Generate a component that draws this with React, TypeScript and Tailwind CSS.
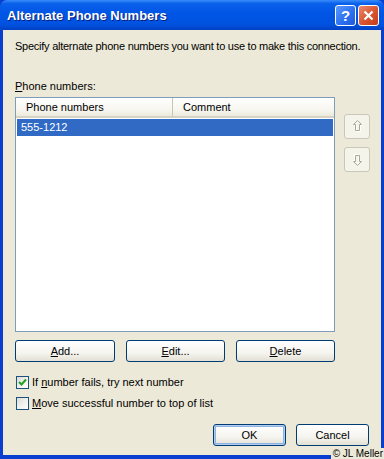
import type { ReactNode } from "react";

const FONT = "font-['Tahoma','Liberation_Sans',Arial,sans-serif] text-[11px] leading-[13px]";

function U({ children }: { children: ReactNode }) {
  return <span className="underline underline-offset-[1px]">{children}</span>;
}

function XpButton({
  children,
  className = "",
  isDefault = false,
}: {
  children: ReactNode;
  className?: string;
  isDefault?: boolean;
}) {
  return (
    <button
      className={`h-[22px] rounded-[3px] border border-[#003c74] bg-[linear-gradient(to_bottom,#ffffff_0%,#f5f4ef_60%,#e3e0d4_100%)] text-black ${
        isDefault ? "shadow-[inset_0_0_0_1px_#b3cdf1,inset_0_0_0_2px_#8db2e3]" : ""
      } ${className}`}
    >
      {children}
    </button>
  );
}

function ArrowButton({ down = false }: { down?: boolean }) {
  return (
    <div className="flex h-[25px] w-[26px] items-center justify-center rounded-[3px] border border-[#c9c7ba] bg-[#f5f4ea]">
      <svg width="11" height="13" viewBox="0 0 11 13" className={down ? "rotate-180" : ""}>
        <path d="M6.5 1.5 L10.5 5.5 L8.5 5.5 L8.5 11.5 L4.5 11.5 L4.5 5.5 L2.5 5.5 Z" fill="none" stroke="#ffffff" />
        <path d="M5.5 0.5 L9.5 4.5 L7.5 4.5 L7.5 10.5 L3.5 10.5 L3.5 4.5 L1.5 4.5 Z" fill="none" stroke="#aca899" />
      </svg>
    </div>
  );
}

function Checkbox({ checked }: { checked?: boolean }) {
  return (
    <div className="flex h-[13px] w-[13px] items-center justify-center border border-[#1c5180] bg-[linear-gradient(135deg,#dcdbd5_0%,#f4f4f0_60%,#ffffff_100%)]">
      {checked && (
        <svg width="9" height="9" viewBox="0 0 9 9">
          <path d="M1 4 L3.5 6.5 L8 1.5" fill="none" stroke="#21a121" strokeWidth="2" />
        </svg>
      )}
    </div>
  );
}

export default function App() {
  return (
    <div className={`relative flex h-[459px] w-[384px] flex-col overflow-hidden bg-[#0a3ed0] ${FONT}`}>
      {/* Title bar */}
      <div className="flex h-[30px] shrink-0 items-center rounded-t-[7px] bg-[linear-gradient(to_bottom,#3a8cfb_0%,#0a61ea_12%,#0055e5_45%,#0053e0_80%,#0041c4_100%)] pl-[7px] pr-[5px]">
        <span className="flex-1 font-['Trebuchet_MS','Liberation_Sans',Arial,sans-serif] text-[13px] font-bold text-white [text-shadow:1px_1px_0_#0a1e79]">
          Alternate Phone Numbers
        </span>
        <div className="flex gap-[2px]">
          <div className="flex h-[21px] w-[21px] items-center justify-center rounded-[3px] border border-white bg-[linear-gradient(135deg,#5b97fb_0%,#2a6ff1_60%,#1f5bd6_100%)] text-[15px] font-bold leading-none text-white">
            ?
          </div>
          <div className="flex h-[21px] w-[21px] items-center justify-center rounded-[3px] border border-white bg-[linear-gradient(135deg,#e88a6c_0%,#d9532f_55%,#c33e1a_100%)]">
            <svg width="11" height="11" viewBox="0 0 11 11">
              <path d="M1.5 1.5 L9.5 9.5 M9.5 1.5 L1.5 9.5" stroke="#ffffff" strokeWidth="2.2" />
            </svg>
          </div>
        </div>
      </div>

      {/* Client area */}
      <div className="mx-[3px] mb-[4px] flex flex-1 flex-col bg-[#ece9d8] pl-[12px] pr-[11px] pt-[10px]">
        <div className="whitespace-nowrap tracking-[-0.25px] text-black">
          Specify alternate phone numbers you want to use to make this connection.
        </div>
        <div className="mt-[27px] text-black">
          <U>P</U>hone numbers:
        </div>

        <div className="mt-[4px] flex gap-[9px]">
          {/* List view */}
          <div className="flex h-[235px] w-[321px] flex-col border border-[#7f9db9] bg-white">
            <div className="flex h-[20px] items-center border-b-2 border-[#d6d3c3] bg-[linear-gradient(to_bottom,#ffffff_0%,#f6f5ee_70%,#ebeadb_100%)] text-black">
              <div className="flex h-full w-[157px] items-center border-r border-[#c7c5b2] pl-[10px]">Phone numbers</div>
              <div className="pl-[10px]">Comment</div>
            </div>
            <div className="mx-[1px] mt-[1px] flex h-[17px] items-center bg-[#316ac5] pl-[4px] text-white">555-1212</div>
          </div>

          {/* Up / down */}
          <div className="flex flex-col gap-[8px] pt-[17px]">
            <ArrowButton />
            <ArrowButton down />
          </div>
        </div>

        <div className="mt-[8px] flex gap-[11px]">
          <XpButton className="w-[100px]">
            <U>A</U>dd...
          </XpButton>
          <XpButton className="w-[99px]">
            <U>E</U>dit...
          </XpButton>
          <XpButton className="w-[99px]">
            <U>D</U>elete
          </XpButton>
        </div>

        <div className="mt-[14px] flex items-center gap-[3px] pl-[1px]">
          <Checkbox checked />
          <span>
            If <U>n</U>umber fails, try next number
          </span>
        </div>
        <div className="mt-[8px] flex items-center gap-[3px] pl-[1px]">
          <Checkbox />
          <span>
            <U>M</U>ove successful number to top of list
          </span>
        </div>

        <div className="mt-[14px] flex justify-end gap-[10px] pr-[1px]">
          <XpButton className="w-[73px]" isDefault>
            OK
          </XpButton>
          <XpButton className="w-[73px]">Cancel</XpButton>
        </div>
      </div>

      {/* Watermark */}
      <div className="absolute bottom-0 right-0 bg-[#ece9d8] pl-[2px] pr-[1px] text-[10px] leading-[11px] text-black">© JL Meller</div>
    </div>
  );
}
